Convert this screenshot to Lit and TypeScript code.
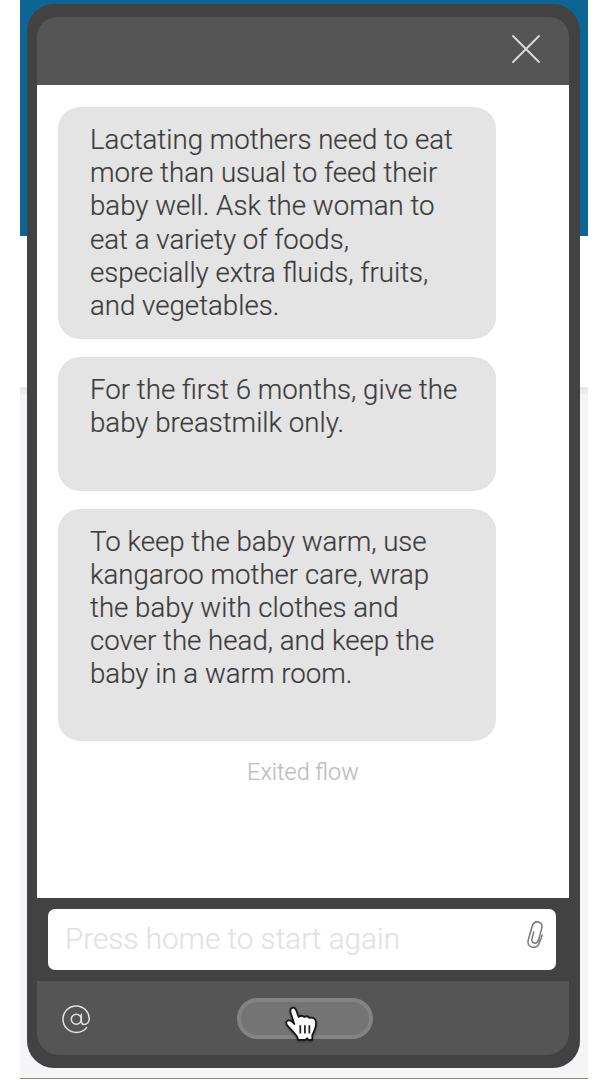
import { LitElement, html, css, svg } from "lit";
import { customElement, property } from "lit/decorators.js";

@customElement("chat-bubble")
class ChatBubble extends LitElement {
  @property({ attribute: false }) lines: string[] = [];

  static styles = css`
    :host {
      display: block;
      box-sizing: border-box;
      width: 438.3px;
      padding: 16.5px 32px 0;
      border-radius: 22px;
      background: #e4e4e4;
      color: #3c3c3c;
      font: 300 27.65px/33.2px Roboto, sans-serif;
      -webkit-text-stroke: 0.2px #3c3c3c;
    }
    :host(.last) {
      line-height: 33px;
    }
    .line {
      white-space: nowrap;
    }
  `;

  render() {
    return this.lines.map((line) => html`<div class="line">${line}</div>`);
  }
}

const closeIcon = svg`<path d="M1 1L27 27M27 1L1 27" fill="none" stroke="#dcdcdc" stroke-width="1.8" stroke-linecap="round"/>`;

const atIcon = svg`<g fill="none" stroke="#e2e2e2" stroke-width="1.5" stroke-linecap="round">
  <circle cx="14.3" cy="14.2" r="5"/>
  <path d="M19.3 9.2V16.6C19.3 18.6 20.5 19.5 22.1 19.5C24.8 19.5 27.2 17.2 27.2 14C27.2 6.7 21.6 1 14.2 1C6.8 1 1 6.8 1 14.2C1 21.6 6.8 27.4 14.2 27.4C18.5 27.4 22.3 25.8 24.6 22.6"/>
</g>`;

const clipIcon = svg`<path d="M6.7 11L5 17.6C4.3 20.2 5.4 21.8 7.2 22.1C9.2 22.5 10.9 21.3 11.6 18.8L14.7 7.6C15.7 4 14.3 1.6 11.5 1C8.6 .5 6.2 2 5.3 5L1.4 18.2C0 22.4 1.8 25.4 5 26.1C8.6 26.8 11.3 25.2 12.4 21.8L15.2 14" fill="none" stroke="#777" stroke-width="1.5" stroke-linecap="round" stroke-linejoin="round"/>`;

const handIcon = svg`<path d="M6.2 2.2C8.2.8 10 2 10.8 4.2L13.2 10.6C15.2 9.2 17.3 9.3 18.6 10.7C20.6 9.6 22.5 9.9 23.6 11.6C26.7 10.8 29.6 12 30 15.3C30.5 20.5 28.8 24 26.5 28.2L26.3 33H22.8L21.5 31.3L19.6 33H12.8L11.6 29.4C8.7 26.4 7.3 23.9 4.6 21.4C2 19 .9 17.3 1.2 15.7C2 13.3 4.9 13.6 6.8 15.2L9 17.5L5.5 6.5C5 4.6 5.1 3 6.2 2.2Z" fill="#fff" stroke="#161616" stroke-width="1.7" stroke-linejoin="round"/>
<path d="M14.8 18.7V26.6M19.3 18.7V26.6M23.6 18.7V26.6" stroke="#222" stroke-width="1.7" fill="none"/>`;

@customElement("app-root")
class AppRoot extends LitElement {
  static styles = css`
    :host {
      display: block;
      width: 608px;
      height: 1080px;
      overflow: hidden;
      background: #fff;
      font-family: Roboto, sans-serif;
    }
    .page {
      box-sizing: border-box;
      width: 568px;
      height: 1079px;
      margin-left: 20px;
      padding: 4px 8.5px 0 6.5px;
      border-bottom: 1px solid #8d8779;
      background:
        linear-gradient(#0d6595, #0d6595) 0 0 / 100% 236px no-repeat,
        linear-gradient(#fff, #fff) 0 236px / 100% 151px no-repeat,
        linear-gradient(#e6e6e6, #eeeeee) 0 387px / 100% 7px no-repeat,
        #f5f5f7;
    }
    .phone {
      box-sizing: border-box;
      display: flex;
      flex-direction: column;
      height: 1064px;
      padding: 13px 10.5px;
      border-radius: 27px;
      background: #424242;
    }
    .header {
      display: flex;
      align-items: flex-start;
      justify-content: flex-end;
      box-sizing: border-box;
      height: 68px;
      padding: 18px 29px 0 0;
      border-radius: 20px 20px 0 0;
      background: #555;
    }
    .screen {
      box-sizing: border-box;
      display: flex;
      flex-direction: column;
      gap: 17.5px;
      height: 813px;
      padding: 21.5px 21px 0;
      background: #fff;
    }
    .tall {
      height: 232.7px;
    }
    .short {
      height: 134.5px;
    }
    .status {
      margin-top: -1px;
      text-align: center;
      color: #bdbdbd;
      font: 300 23.4px/28px Roboto, sans-serif;
      -webkit-text-stroke: 0.2px #bdbdbd;
    }
    .entry {
      box-sizing: border-box;
      height: 83px;
      padding: 11px 13px 11px 11px;
    }
    .field {
      display: flex;
      align-items: flex-start;
      justify-content: space-between;
      box-sizing: border-box;
      height: 61.3px;
      padding: 0 13.5px 0 17px;
      border-radius: 7px;
      background: #fff;
    }
    .hint {
      color: #e2e2e2;
      font: 300 29.6px/60px Roboto, sans-serif;
      letter-spacing: 0.04px;
      -webkit-text-stroke: 0.2px #e2e2e2;
      white-space: nowrap;
    }
    .clip {
      margin-top: 11.5px;
    }
    .footer {
      display: grid;
      grid-template-columns: 200px 136px 1fr;
      align-items: center;
      flex: 1;
      border-radius: 0 0 22px 22px;
      background: #555;
    }
    .at {
      margin: 1.5px 0 0 25px;
    }
    .home {
      position: relative;
      box-sizing: border-box;
      height: 41px;
      border: 4px solid #838383;
      border-radius: 21px;
      background: #747474;
    }
    .hand {
      position: absolute;
      left: 44px;
      top: 4px;
      filter: drop-shadow(0 1px 1px rgba(0, 0, 0, 0.4));
    }
    svg {
      display: block;
      overflow: visible;
    }
  `;

  render() {
    return html`
      <div class="page">
        <div class="phone">
          <div class="header">
            <svg class="close" width="28" height="28" viewBox="0 0 28 28">${closeIcon}</svg>
          </div>
          <div class="screen">
            <chat-bubble
              class="tall"
              .lines=${[
                "Lactating mothers need to eat",
                "more than usual to feed their",
                "baby well. Ask the woman to",
                "eat a variety of foods,",
                "especially extra fluids, fruits,",
                "and vegetables.",
              ]}
            ></chat-bubble>
            <chat-bubble
              class="short"
              .lines=${["For the first 6 months, give the", "baby breastmilk only."]}
            ></chat-bubble>
            <chat-bubble
              class="tall last"
              .lines=${[
                "To keep the baby warm, use",
                "kangaroo mother care, wrap",
                "the baby with clothes and",
                "cover the head, and keep the",
                "baby in a warm room.",
              ]}
            ></chat-bubble>
            <div class="status">Exited flow</div>
          </div>
          <div class="entry">
            <div class="field">
              <span class="hint">Press home to start again</span>
              <svg class="clip" width="16" height="27" viewBox="0 0 16 27">${clipIcon}</svg>
            </div>
          </div>
          <div class="footer">
            <svg class="at" width="28" height="28" viewBox="0 0 28 28">${atIcon}</svg>
            <div class="home">
              <svg class="hand" width="32" height="35" viewBox="0 0 31 34">${handIcon}</svg>
            </div>
          </div>
        </div>
      </div>
    `;
  }
}
